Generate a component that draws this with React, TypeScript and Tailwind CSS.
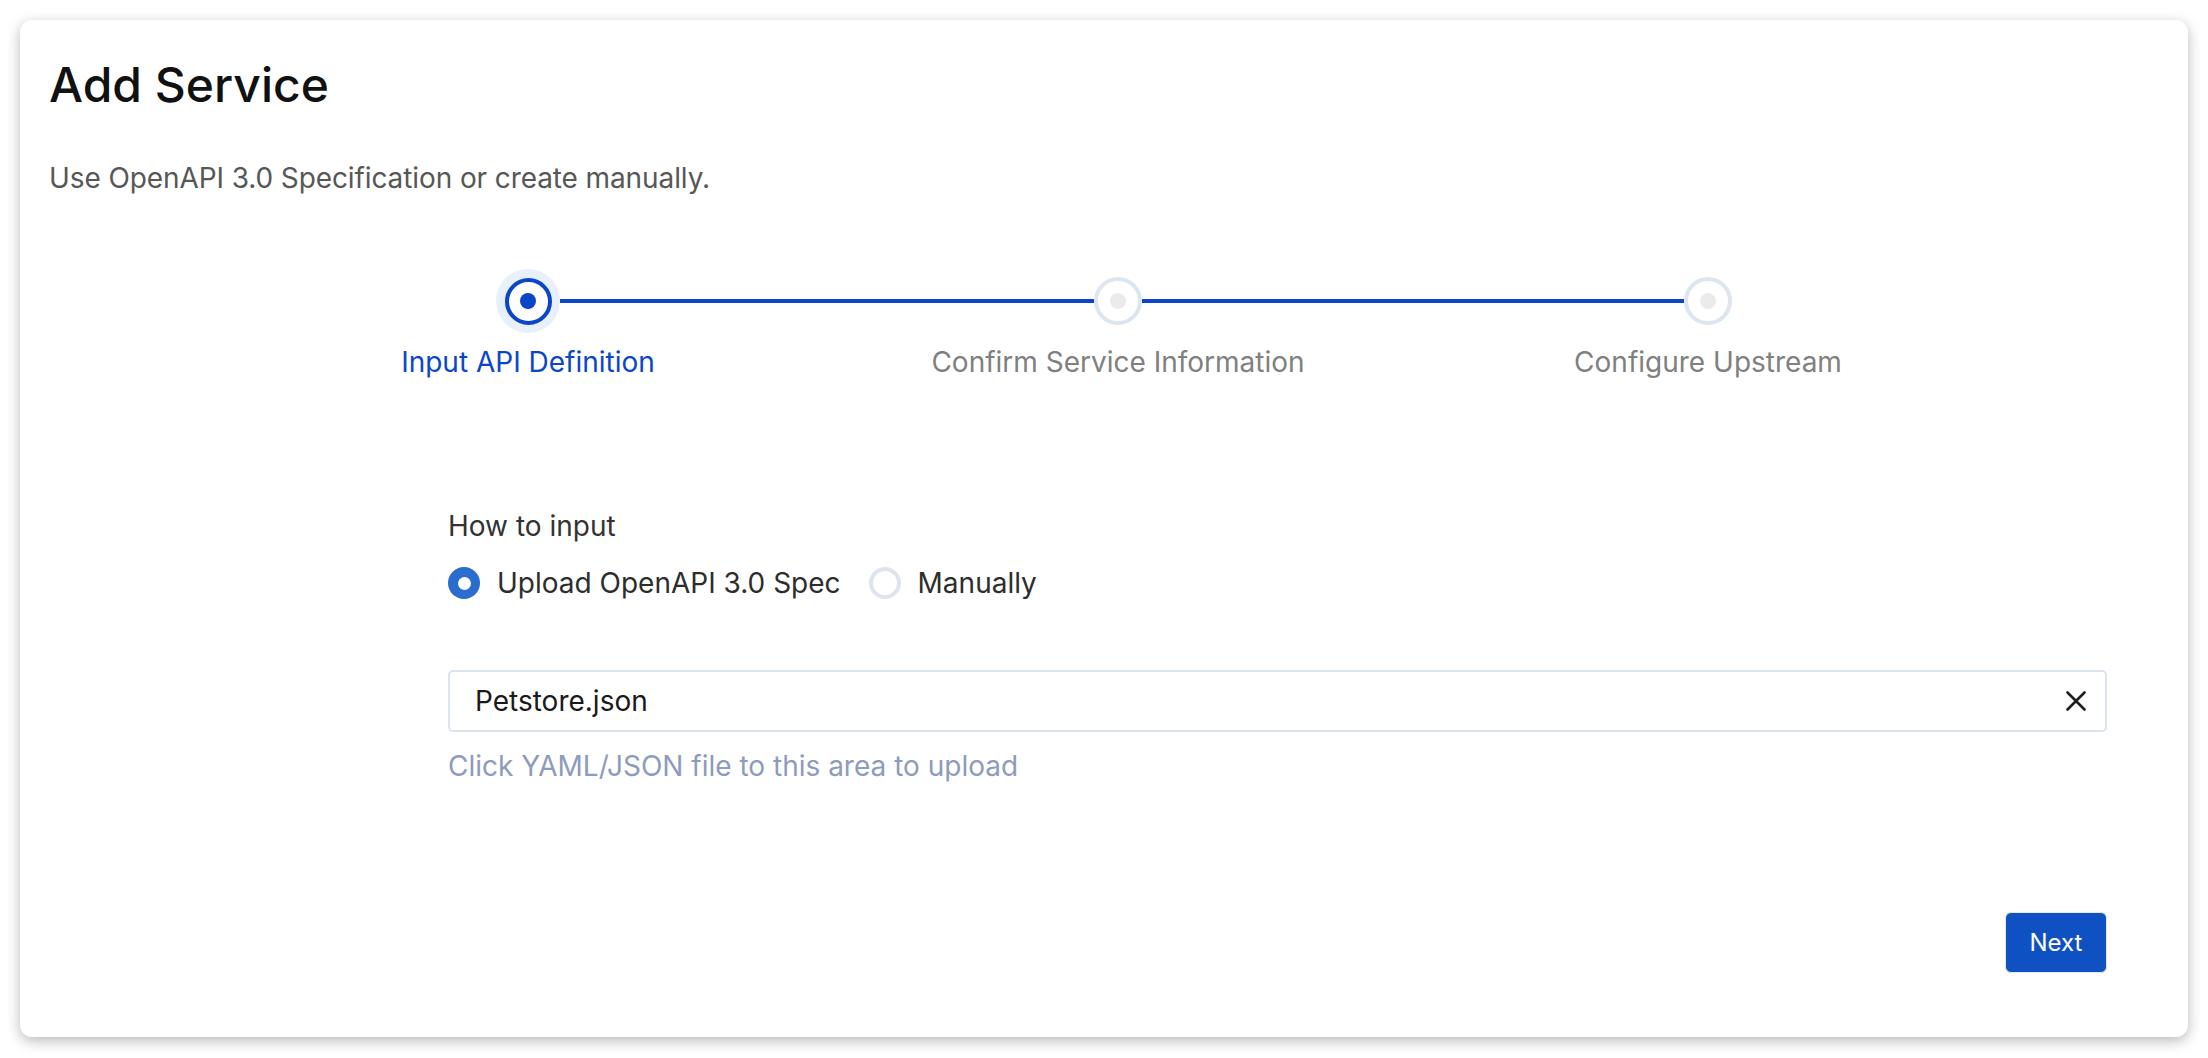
import React from "react";

const steps = [
  { title: "Input API Definition", state: "active" },
  { title: "Confirm Service Information", state: "wait" },
  { title: "Configure Upstream", state: "wait" },
];

function StepIcon({ active }: { active: boolean }) {
  if (active) {
    return (
      <div className="flex h-[64px] w-[64px] items-center justify-center rounded-full bg-[#e8f0fb]">
        <div className="flex h-[47px] w-[47px] items-center justify-center rounded-full border-4 border-[#0b46c9] bg-white">
          <div className="h-[16px] w-[16px] rounded-full bg-[#0b46c9]"></div>
        </div>
      </div>
    );
  }
  return (
    <div className="flex h-[48px] w-[48px] items-center justify-center rounded-full border-4 border-[#dde5ef] bg-white">
      <div className="h-[16px] w-[16px] rounded-full bg-[#ebebeb]"></div>
    </div>
  );
}

function Stepper() {
  return (
    <div className="mt-[71px] ml-[184px] flex">
      {steps.map((step, i) => (
        <div key={step.title} className="flex w-[590px] flex-col items-center">
          <div className="flex h-[64px] w-full items-center">
            <div
              className={`h-[4px] flex-1 ${i === 0 ? "bg-transparent" : "bg-[#0b46c9]"}`}
            ></div>
            <StepIcon active={step.state === "active"} />
            <div
              className={`h-[4px] flex-1 ${i === steps.length - 1 ? "bg-transparent" : "bg-[#0b46c9]"}`}
            ></div>
          </div>
          <p
            className={`mt-[9px] text-[28px] leading-[40px] ${step.state === "active" ? "text-[#0b46c9]" : "text-[#808080]"}`}
          >
            {step.title}
          </p>
        </div>
      ))}
    </div>
  );
}

function Radio({ checked, label }: { checked: boolean; label: string }) {
  return (
    <label className="flex cursor-pointer items-center gap-[17px]">
      {checked ? (
        <span className="flex h-[32px] w-[32px] items-center justify-center rounded-full bg-[#2a6dcd]">
          <span className="h-[13px] w-[13px] rounded-full bg-white"></span>
        </span>
      ) : (
        <span className="h-[32px] w-[32px] rounded-full border-4 border-[#dde4ee] bg-white"></span>
      )}
      <span className="text-[28px] leading-[40px] text-[#2d2d2d]">{label}</span>
    </label>
  );
}

export default function App() {
  return (
    <div className="min-h-screen bg-white p-[20px] font-['Inter',sans-serif]">
      <div className="h-[1017px] rounded-[12px] bg-white px-[29px] pt-[36px] shadow-[0_4px_14px_rgba(0,0,0,0.28)]">
        <h1 className="text-[48px] leading-[58px] font-medium text-[#111111]">
          Add Service
        </h1>
        <p className="mt-[44px] text-[28px] leading-[40px] tracking-[-0.1px] text-[#575757]">
          Use OpenAPI 3.0 Specification or create manually.
        </p>

        <Stepper />

        <div className="mt-[124px] ml-[399px] w-[1659px]">
          <p className="text-[28px] leading-[40px] text-[#333333]">How to input</p>
          <div className="mt-[17px] flex items-center gap-[28px]">
            <Radio checked label="Upload OpenAPI 3.0 Spec" />
            <Radio checked={false} label="Manually" />
          </div>

          <div className="mt-[67px] flex h-[62px] items-center justify-between rounded-[5px] border-2 border-[#dbe3ee] pr-[19px] pl-[25px]">
            <span className="text-[28px] leading-[40px] text-[#1a1a1a]">Petstore.json</span>
            <svg width="20" height="20" viewBox="0 0 20 20" fill="none">
              <path
                d="M1.5 1.5L18.5 18.5M18.5 1.5L1.5 18.5"
                stroke="#1f1f1f"
                strokeWidth="2.6"
                strokeLinecap="round"
              />
            </svg>
          </div>
          <p className="mt-[14px] text-[28px] leading-[40px] text-[#8d9bbc]">
            Click YAML/JSON file to this area to upload
          </p>

          <div className="mt-[126px] flex justify-end">
            <button className="h-[61px] w-[102px] cursor-pointer rounded-[6px] border border-[#e6e8ee] bg-[#0f51c2] text-[24px] text-white">
              Next
            </button>
          </div>
        </div>
      </div>
    </div>
  );
}
